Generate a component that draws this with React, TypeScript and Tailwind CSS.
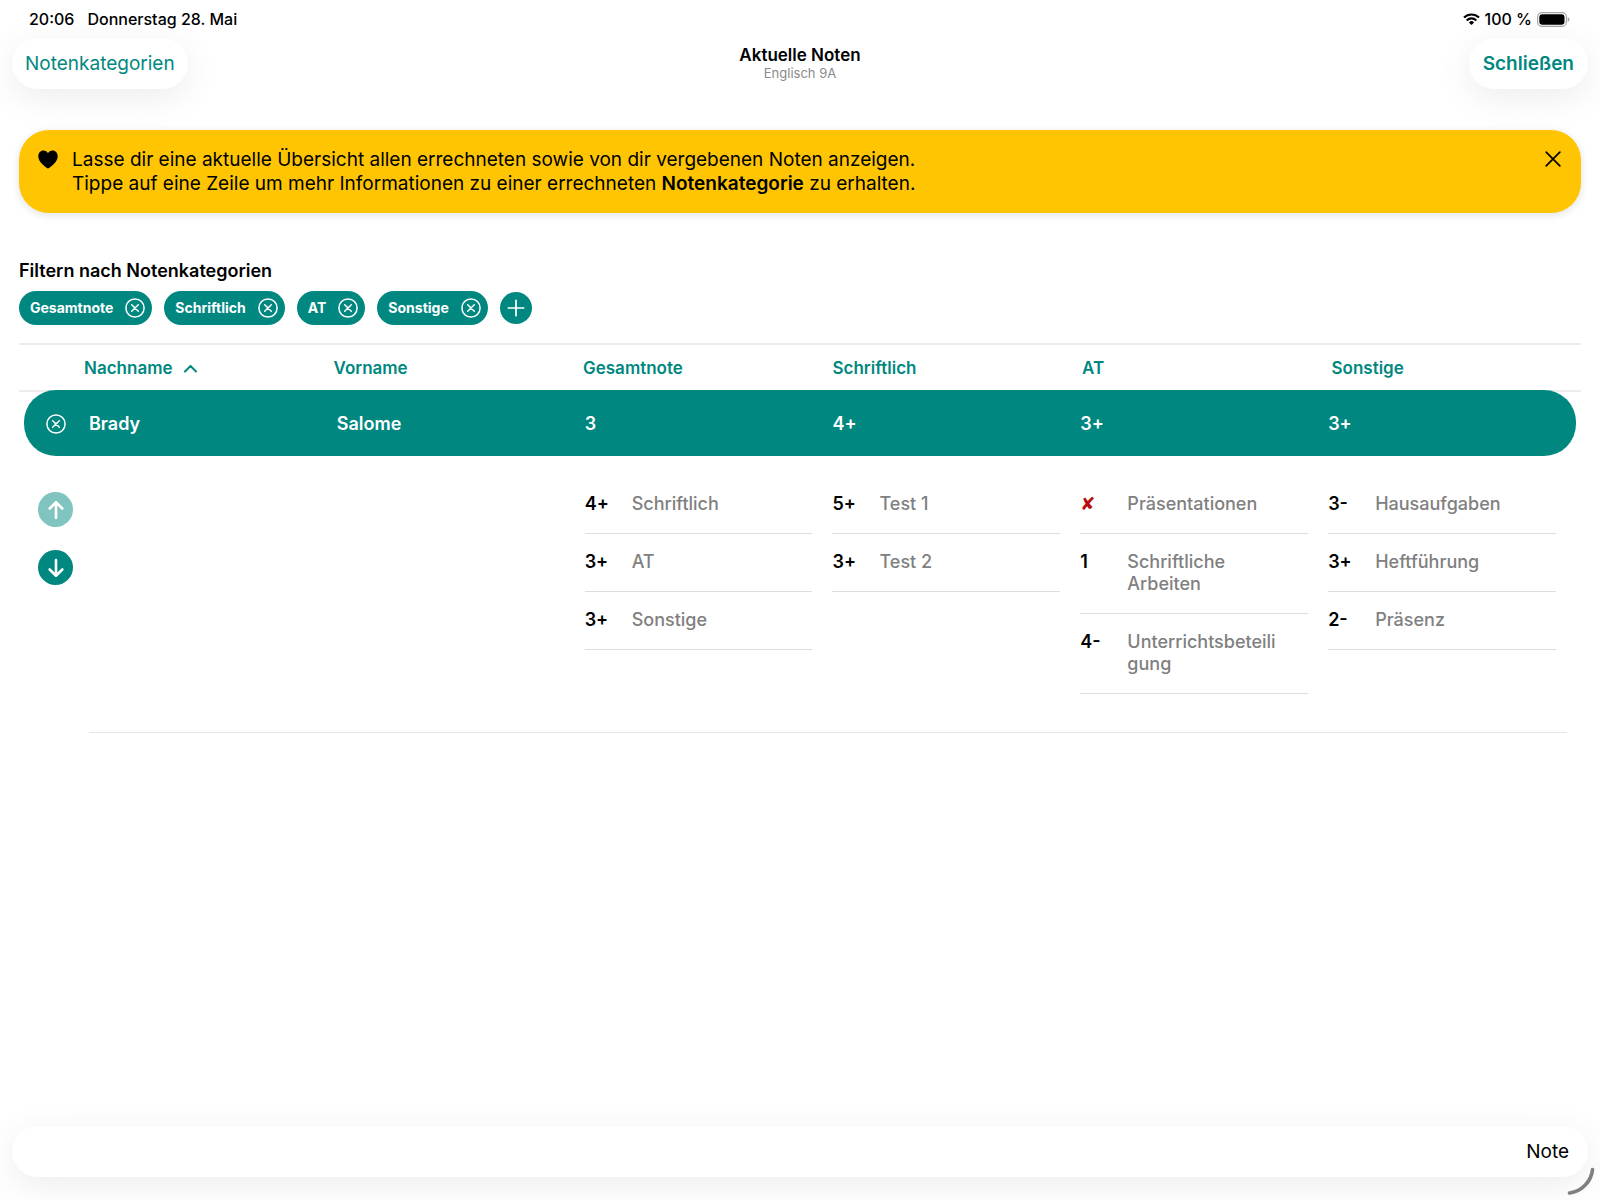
import type { ReactNode } from "react";
import clsx from "clsx";

type Grade = { value: string; label: string };

const filters = ["Gesamtnote", "Schriftlich", "AT", "Sonstige"];

const columns = ["Nachname", "Vorname", "Gesamtnote", "Schriftlich", "AT", "Sonstige"];

const student = ["Brady", "Salome", "3", "4+", "3+", "3+"];

const details: Grade[][] = [
  [
    { value: "4+", label: "Schriftlich" },
    { value: "3+", label: "AT" },
    { value: "3+", label: "Sonstige" },
  ],
  [
    { value: "5+", label: "Test 1" },
    { value: "3+", label: "Test 2" },
  ],
  [
    { value: "✘", label: "Präsentationen" },
    { value: "1", label: "Schriftliche Arbeiten" },
    { value: "4-", label: "Unterrichtsbeteiligung" },
  ],
  [
    { value: "3-", label: "Hausaufgaben" },
    { value: "3+", label: "Heftführung" },
    { value: "2-", label: "Präsenz" },
  ],
];

function Icon({ size, stroke = 1.6, children }: { size: number; stroke?: number; children: ReactNode }) {
  return (
    <svg
      width={size}
      height={size}
      viewBox="0 0 20 20"
      fill="none"
      stroke="currentColor"
      strokeWidth={stroke}
      strokeLinecap="round"
      strokeLinejoin="round"
      aria-hidden="true"
    >
      {children}
    </svg>
  );
}

function CircleX() {
  return (
    <Icon size={20} stroke={1.5}>
      <circle cx="10" cy="10" r="9.1" />
      <path d="M6.7 6.7l6.6 6.6M13.3 6.7l-6.6 6.6" />
    </Icon>
  );
}

function StatusBar() {
  return (
    <div className="flex h-[38px] items-center justify-between pr-[30px] pl-[29px] text-base font-medium">
      <div className="flex gap-[13px]">
        <span>20:06</span>
        <span>Donnerstag 28. Mai</span>
      </div>
      <div className="flex items-center gap-[5px]">
        <svg width="17" height="12" viewBox="0 0 17 12" fill="none" stroke="currentColor" aria-hidden="true">
          <path d="M1 4.6a10.7 10.7 0 0 1 15 0" strokeWidth="2.1" />
          <path d="M3.7 7.4a6.8 6.8 0 0 1 9.6 0" strokeWidth="2.1" />
          <path d="M8.5 12L5.9 9.4a3.7 3.7 0 0 1 5.2 0z" fill="currentColor" stroke="none" />
        </svg>
        <span>100 %</span>
        <svg width="33" height="15" viewBox="0 0 33 15" aria-hidden="true">
          <rect x="0.6" y="0.6" width="28.8" height="13.8" rx="4.4" fill="none" stroke="#a3a3a3" strokeWidth="1.1" />
          <rect x="2.3" y="2.3" width="25.2" height="10.4" rx="3" fill="#000" />
          <path d="M30.7 5.2c1.1.4 1.8 1.2 1.8 2.3s-.7 1.9-1.8 2.3z" fill="#a3a3a3" />
        </svg>
      </div>
    </div>
  );
}

function Header() {
  return (
    <header className="grid grid-cols-[1fr_auto_1fr] items-start px-3">
      <button className="h-[51px] justify-self-start rounded-full bg-white px-[13px] pt-0.5 text-[19px] text-[#008880] shadow-[0_8px_36px_rgba(0,0,0,0.08)]">
        Notenkategorien
      </button>
      <div className="pt-[7px] text-center">
        <h1 className="text-[17px] leading-5 font-semibold">Aktuelle Noten</h1>
        <p className="text-[13px] leading-4 text-[#8a8a8a]">Englisch 9A</p>
      </div>
      <button className="h-[51px] justify-self-end rounded-full bg-white px-3.5 pt-0.5 text-[19px] font-semibold text-[#008880] shadow-[0_8px_36px_rgba(0,0,0,0.08)]">
        Schließen
      </button>
    </header>
  );
}

function Banner() {
  return (
    <section className="mx-[19px] mt-[41px] flex items-start rounded-[30px] bg-[#ffc502] px-[19px] pt-[18px] pb-[17px] shadow-[0_2px_8px_rgba(0,0,0,0.12)]">
      <svg className="mt-[2px] mr-3.5" width="20" height="19" viewBox="0 0 20 19" aria-hidden="true">
        <path d="M10 18.5C9.4 18.5.3 12.8.3 6.3.3 2.9 2.6.6 5.4.6 7.5.6 9 1.6 10 3.3 11 1.6 12.5.6 14.6.6c2.8 0 5.1 2.3 5.1 5.7 0 6.5-9.1 12.2-9.7 12.2z" />
      </svg>
      <p className="flex-1 text-[19px] leading-6">
        Lasse dir eine aktuelle Übersicht allen errechneten sowie von dir vergebenen Noten anzeigen.
        <br />
        Tippe auf eine Zeile um mehr Informationen zu einer errechneten{" "}
        <b className="font-semibold">Notenkategorie</b> zu erhalten.
      </p>
      <button aria-label="Hinweis schließen" className="mt-[2px]">
        <Icon size={18} stroke={1.9}>
          <path d="M2.4 2.4l15.2 15.2M17.6 2.4L2.4 17.6" />
        </Icon>
      </button>
    </section>
  );
}

function Filters() {
  return (
    <section className="mt-[46px] px-[19px]">
      <h2 className="text-lg leading-6 font-semibold">Filtern nach Notenkategorien</h2>
      <div className="mt-2 flex items-center gap-3">
        {filters.map((name) => (
          <button
            key={name}
            className="flex h-[34px] items-center gap-3 rounded-full bg-[#008880] pr-[7px] pl-[11px] text-sm font-bold text-white"
          >
            {name}
            <CircleX />
          </button>
        ))}
        <button
          aria-label="Filter hinzufügen"
          className="grid size-8 place-items-center rounded-full bg-[#008880] text-white"
        >
          <Icon size={18} stroke={1.9}>
            <path d="M10 1.5v17M1.5 10h17" />
          </Icon>
        </button>
      </div>
    </section>
  );
}

function GradeList({ grades }: { grades: Grade[] }) {
  return (
    <ul className="mr-5">
      {grades.map(({ value, label }) => (
        <li key={label} className="flex border-b border-[#dedede] pt-[17px] pr-6 pb-[18px] leading-[22px]">
          <span
            className={clsx(
              "w-[47px] shrink-0",
              value === "✘" ? "font-['DejaVu_Sans'] font-normal text-[#b90d0d]" : "font-semibold",
            )}
          >
            {value}
          </span>
          <span className="min-w-0 flex-1 font-medium break-words text-[#808080]">{label}</span>
        </li>
      ))}
    </ul>
  );
}

function GradesTable() {
  return (
    <table className="mt-[18px] block text-left text-lg">
      <thead className="block px-[19px]">
        <tr className="grid grid-cols-6 border-y-2 border-[#ececec] pl-[65px] text-[17px] text-[#008880]">
          {columns.map((name, i) => (
            <th key={name} className="font-semibold">
              <button className="flex h-[45px] items-center gap-[11px] pt-0.5">
                {name}
                {i === 0 && (
                  <svg width="13" height="8" viewBox="0 0 13 8" fill="none" aria-hidden="true">
                    <path d="M1 6.5L6.5 1 12 6.5" stroke="currentColor" strokeWidth="2" strokeLinecap="round" strokeLinejoin="round" />
                  </svg>
                )}
              </button>
            </th>
          ))}
        </tr>
      </thead>
      <tbody className="-mt-[2px] block px-6">
        <tr className="grid h-[66px] grid-cols-[65px_repeat(6,minmax(0,1fr))] items-center rounded-[32px] bg-[#008880] pt-px font-semibold text-white">
          <td className="flex pl-[22px]">
            <button aria-label="Auswahl aufheben">
              <CircleX />
            </button>
          </td>
          {student.map((value, i) => (
            <td key={i}>{value}</td>
          ))}
        </tr>
        <tr className="grid grid-cols-[65px_repeat(6,minmax(0,1fr))] pt-5 pb-[38px]">
          <td className="flex flex-col gap-[23px] pt-4 pl-3.5">
            <button
              disabled
              aria-label="Vorherige Zeile"
              className="grid size-[35px] place-items-center rounded-full bg-[#80c4bf] text-white"
            >
              <Icon size={20} stroke={2.6}>
                <path d="M10 18V2.5M3.7 8.5L10 2.3l6.3 6.2" />
              </Icon>
            </button>
            <button
              aria-label="Nächste Zeile"
              className="grid size-[35px] place-items-center rounded-full bg-[#008880] text-white"
            >
              <Icon size={20} stroke={2.6}>
                <path d="M10 2v15.5M3.7 11.5l6.3 6.2 6.3-6.2" />
              </Icon>
            </button>
          </td>
          <td />
          <td />
          {details.map((grades, i) => (
            <td key={i}>
              <GradeList grades={grades} />
            </td>
          ))}
        </tr>
      </tbody>
    </table>
  );
}

export default function App() {
  return (
    <div className="relative flex min-h-screen flex-col overflow-hidden bg-white font-['Inter',sans-serif] text-black">
      <StatusBar />
      <Header />
      <main>
        <Banner />
        <Filters />
        <GradesTable />
        <hr className="mr-[33px] ml-[89px] border-[#e6e6e6]" />
      </main>
      <footer className="mx-3 mt-auto mb-[23px] flex h-[51px] items-center justify-end rounded-full bg-white pr-[19px] shadow-[0_8px_36px_rgba(0,0,0,0.08)]">
        <button className="pt-0.5 text-[19px]">Note</button>
      </footer>
      {/* drag handle in the window corner */}
      <svg className="absolute right-[5px] bottom-[5px]" width="28" height="28" viewBox="0 0 28 28" fill="none" aria-hidden="true">
        <path d="M25.5 2.5C24.5 14 15 24.5 2.5 26" stroke="#808080" strokeWidth="3.6" strokeLinecap="round" />
      </svg>
    </div>
  );
}
